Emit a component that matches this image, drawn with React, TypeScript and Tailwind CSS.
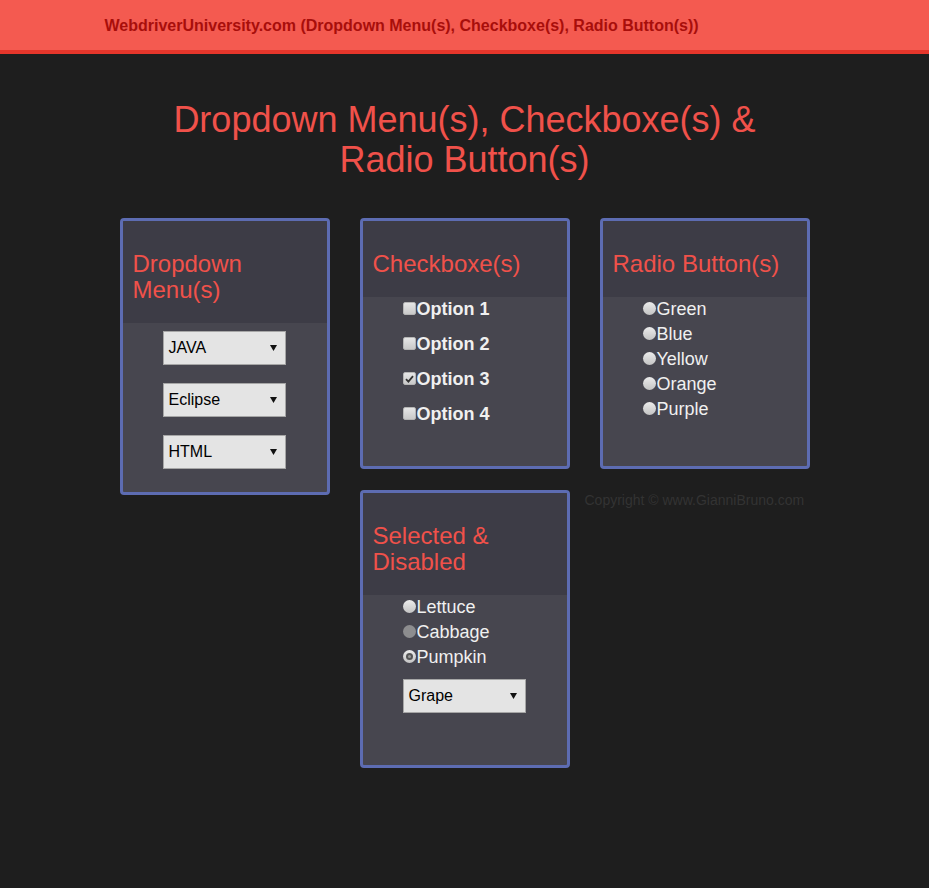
import React from 'react';

const font = { fontFamily: '"Liberation Sans", Arial, sans-serif' };

const Select: React.FC<{ value: string }> = ({ value }) => (
    <div className="w-[123px] h-[34px] bg-[#e4e4e4] border border-[#a6a6a6] flex items-center justify-between pl-[5px] pr-[8px] text-[16px] text-black">
        <span>{value}</span>
        <svg width="7" height="6" viewBox="0 0 7 6">
            <path d="M0 0 H7 L3.5 6 Z" fill="#111" />
        </svg>
    </div>
);

const Checkbox: React.FC<{ checked?: boolean }> = ({ checked }) => (
    <span className="w-[13px] h-[13px] mt-[-2px] rounded-[2px] bg-gradient-to-b from-[#e6e6e6] to-[#c9c9c9] border border-[#b5b5b5] flex items-center justify-center shrink-0">
        {checked && (
            <svg width="9" height="8" viewBox="0 0 9 8">
                <path d="M1 4.2 L3.4 6.6 L8 1.2" stroke="#333" strokeWidth="1.8" fill="none" />
            </svg>
        )}
    </span>
);

const Radio: React.FC<{ checked?: boolean; disabled?: boolean }> = ({ checked, disabled }) => (
    <span
        className={
            disabled
                ? 'w-[13px] h-[13px] mt-[-2px] rounded-full bg-[#8d8d8f] shrink-0'
                : 'w-[13px] h-[13px] mt-[-2px] rounded-full bg-gradient-to-b from-[#ececec] to-[#c4c4c4] shrink-0 flex items-center justify-center'
        }
    >
        {checked && (
            <span className="w-[7px] h-[7px] rounded-full bg-[#555] flex items-center justify-center">
                <span className="w-[3px] h-[3px] rounded-full bg-[#999]" />
            </span>
        )}
    </span>
);

const Card: React.FC<{ title: React.ReactNode; height: string; children: React.ReactNode }> = ({ title, height, children }) => (
    <div className={`${height} border-[3px] border-[#5d6cb2] rounded-[4px] bg-[#47464f] overflow-hidden flex flex-col`}>
        <div className="bg-[#3d3c46] pt-[30px] pb-[20px] px-[10px]">
            <h2 className="text-[24px] leading-[26px] text-[#f0514a]">{title}</h2>
        </div>
        <div className="pl-[40px] flex-1">{children}</div>
    </div>
);

export default function App() {
    return (
        <div className="min-h-screen bg-[#1e1e1e]" style={font}>
            <div className="h-[54px] bg-[#f45a50] border-b-4 border-[#e6362b]">
                <div className="w-[750px] mx-auto px-[15px] pt-[14px]">
                    <span className="text-[16px] leading-[20px] font-bold text-[#a80e0b]">
                        WebdriverUniversity.com (Dropdown Menu(s), Checkboxe(s), Radio Button(s))
                    </span>
                </div>
            </div>

            <h1 className="w-[620px] mx-auto mt-[46px] text-center text-[36px] leading-[39.6px] text-[#f0514a]">
                Dropdown Menu(s), Checkboxe(s) &amp; Radio Button(s)
            </h1>

            <div className="w-[690px] mx-auto mt-[39px] flex gap-[30px] items-start text-[#f0f0f0] text-[18px]">
                <div className="w-[210px]">
                    <Card title={<>Dropdown<br />Menu(s)</>} height="h-[277px]">
                        <div className="pt-[8px] flex flex-col gap-[18px]">
                            <Select value="JAVA" />
                            <Select value="Eclipse" />
                            <Select value="HTML" />
                        </div>
                    </Card>
                </div>

                <div className="w-[210px] flex flex-col gap-[21px]">
                    <Card title="Checkboxe(s)" height="h-[251px]">
                        <div className="flex flex-col gap-[10px] font-bold leading-[25px]">
                            {['Option 1', 'Option 2', 'Option 3', 'Option 4'].map((o, i) => (
                                <label key={o} className="flex items-center gap-[1px]">
                                    <Checkbox checked={i === 2} />
                                    <span>{o}</span>
                                </label>
                            ))}
                        </div>
                    </Card>
                    <Card title={<>Selected &amp;<br />Disabled</>} height="h-[278px]">
                        <div className="flex flex-col leading-[25px]">
                            <label className="flex items-center gap-[1px]">
                                <Radio />
                                <span>Lettuce</span>
                            </label>
                            <label className="flex items-center gap-[1px]">
                                <Radio disabled />
                                <span>Cabbage</span>
                            </label>
                            <label className="flex items-center gap-[1px]">
                                <Radio checked />
                                <span>Pumpkin</span>
                            </label>
                        </div>
                        <div className="mt-[9px]">
                            <Select value="Grape" />
                        </div>
                    </Card>
                </div>

                <div className="w-[210px] flex flex-col gap-[21px]">
                    <Card title="Radio Button(s)" height="h-[251px]">
                        <div className="flex flex-col leading-[25px]">
                            {['Green', 'Blue', 'Yellow', 'Orange', 'Purple'].map((c) => (
                                <label key={c} className="flex items-center gap-[1px]">
                                    <Radio />
                                    <span>{c}</span>
                                </label>
                            ))}
                        </div>
                    </Card>
                    <p className="-ml-[15px] text-[14px] leading-[20px] text-[#333333]">
                        Copyright © www.GianniBruno.com
                    </p>
                </div>
            </div>
        </div>
    );
}
